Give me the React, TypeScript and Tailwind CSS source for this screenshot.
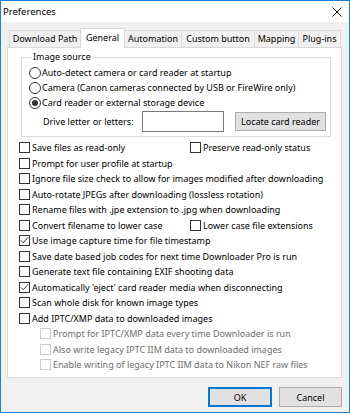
import React from "react";

const Check = ({ checked = false, disabled = false }: { checked?: boolean; disabled?: boolean }) => (
  <span
    className={`w-[11px] h-[11px] border bg-white flex items-center justify-center shrink-0 ${
      disabled ? "border-[#cccccc]" : "border-[#333333]"
    }`}
  >
    {checked && (
      <svg width="9" height="9" viewBox="0 0 9 9">
        <path d="M0.8 4.3 L3.2 6.8 L8.2 1.2" stroke="#333333" strokeWidth="1" fill="none" />
      </svg>
    )}
  </span>
);

const Radio = ({ checked = false }: { checked?: boolean }) => (
  <span className="w-[12px] h-[12px] rounded-full border border-[#333333] bg-white flex items-center justify-center shrink-0">
    {checked && <span className="w-[6px] h-[6px] rounded-full bg-[#333333]" />}
  </span>
);

const CheckRow = ({
  label,
  checked = false,
  disabled = false,
  indent = false,
}: {
  label: string;
  checked?: boolean;
  disabled?: boolean;
  indent?: boolean;
}) => (
  <div className={`flex items-center gap-[2px] h-[15.5px] ${indent ? "pl-[21px]" : ""}`}>
    <Check checked={checked} disabled={disabled} />
    <span className={`whitespace-nowrap ${disabled ? "text-[#6d6d6d]" : "text-black"}`}>{label}</span>
  </div>
);

const RadioRow = ({ label, checked = false }: { label: string; checked?: boolean }) => (
  <div className="flex items-center gap-[1px] h-[15px]">
    <Radio checked={checked} />
    <span className="whitespace-nowrap">{label}</span>
  </div>
);

const tabs = [
  { name: "Download Path", w: "w-[72px]" },
  { name: "General", w: "w-[45px]", active: true },
  { name: "Automation", w: "w-[58px]" },
  { name: "Custom button", w: "w-[74px]" },
  { name: "Mapping", w: "w-[45px]" },
  { name: "Plug-ins", w: "w-[43px]" },
];

export default function App() {
  return (
    <div
      className="w-[350px] h-[413px] border border-[#1883d7] bg-[#f0f0f0] flex flex-col text-black text-[9px] leading-[15px]"
      style={{ fontFamily: '"Noto Sans", "Open Sans", sans-serif' }}
    >
      {/* Title bar */}
      <div className="h-[21px] bg-white flex items-center justify-between pl-[2px] pr-[7px] shrink-0">
        <span className="text-[9.5px]">Preferences</span>
        <svg width="10" height="10" viewBox="0 0 10 10">
          <path d="M0.5 0.5 L9.5 9.5 M9.5 0.5 L0.5 9.5" stroke="#111111" strokeWidth="1" fill="none" />
        </svg>
      </div>

      {/* Body */}
      <div className="flex flex-col pl-[6px] pt-[6px]">
        {/* Tabs */}
        <div className="flex items-end h-[20px] -mb-px pl-[2px] relative z-10">
          {tabs.map((t, i) =>
            t.active ? (
              <div
                key={t.name}
                className={`${t.w} h-[20px] bg-white border border-b-0 border-[#d9d9d9] flex items-start justify-center pt-[1px] -ml-px relative z-10`}
              >
                {t.name}
              </div>
            ) : (
              <div
                key={t.name}
                className={`${t.w} h-[18px] bg-[#f0f0f0] border border-[#d9d9d9] flex items-start justify-center ${
                  i === 0 ? "" : "-ml-px"
                }`}
              >
                {t.name}
              </div>
            )
          )}
        </div>

        {/* Panel */}
        <div className="w-[335px] h-[331px] bg-white border border-[#d9d9d9] flex flex-col">
          <fieldset className="ml-[13px] mt-[2px] w-[310px] border border-[#dcdcdc] pl-[7px] pb-[4px]">
            <legend className="ml-[2px] px-[2px] leading-[14px]">Image source</legend>
            <div className="flex flex-col mt-[1px]">
              <RadioRow label="Auto-detect camera or card reader at startup" />
              <RadioRow label="Camera (Canon cameras connected by USB or FireWire only)" />
              <RadioRow label="Card reader or external storage device" checked />
              <div className="flex items-center h-[21px] mt-[1px] pl-[14px]">
                <span className="w-[99px] whitespace-nowrap">Drive letter or letters:</span>
                <div className="w-[82px] h-[21px] border border-[#7a7a7a] bg-white" />
                <button className="ml-[11px] w-[91px] h-[19px] border border-[#adadad] bg-[#e1e1e1] flex items-center justify-center leading-[15px]">
                  Locate card reader
                </button>
              </div>
            </div>
          </fieldset>

          <div className="flex flex-col mt-[3px] pl-[11px]">
            <div className="flex items-center h-[15.5px]">
              <div className="w-[171px]">
                <CheckRow label="Save files as read-only" />
              </div>
              <CheckRow label="Preserve read-only status" />
            </div>
            <CheckRow label="Prompt for user profile at startup" />
            <CheckRow label="Ignore file size check to allow for images modified after downloading" />
            <CheckRow label="Auto-rotate JPEGs after downloading (lossless rotation)" />
            <CheckRow label="Rename files with .jpe extension to .jpg when downloading" />
            <div className="flex items-center h-[15.5px]">
              <div className="w-[171px]">
                <CheckRow label="Convert filename to lower case" />
              </div>
              <CheckRow label="Lower case file extensions" />
            </div>
            <CheckRow label="Use image capture time for file timestamp" checked />
            <CheckRow label="Save date based job codes for next time Downloader Pro is run" />
            <CheckRow label="Generate text file containing EXIF shooting data" />
            <CheckRow label="Automatically 'eject' card reader media when disconnecting" checked />
            <CheckRow label="Scan whole disk for known image types" />
            <CheckRow label="Add IPTC/XMP data to downloaded images" />
            <CheckRow label="Prompt for IPTC/XMP data every time Downloader is run" disabled indent />
            <CheckRow label="Also write legacy IPTC IIM data to downloaded images" disabled indent />
            <CheckRow label="Enable writing of legacy IPTC IIM data to Nikon NEF raw files" disabled indent />
          </div>
        </div>

        {/* Buttons */}
        <div className="w-[335px] flex justify-end gap-[7px] mt-[9px]">
          <button className="w-[64px] h-[20px] border-2 border-[#0078d7] bg-[#e1e1e1] flex items-center justify-center leading-[15px]">
            OK
          </button>
          <button className="w-[63px] h-[20px] border border-[#adadad] bg-[#e1e1e1] flex items-center justify-center leading-[15px]">
            Cancel
          </button>
        </div>
      </div>
    </div>
  );
}
